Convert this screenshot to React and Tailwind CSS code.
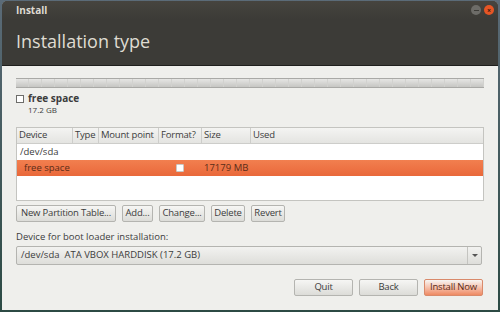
import React from 'react';

const font = { fontFamily: '"Open Sans", "DejaVu Sans", sans-serif' };

function Btn({ children, className = '' }) {
  return (
    <div className={`h-[17px] px-[3px] flex items-center justify-center whitespace-nowrap rounded-[2px] border border-[#b4b4b0] bg-gradient-to-b from-[#f6f6f4] to-[#dcdcd8] text-[9.5px] tracking-[-0.2px] text-[#3c3c3c] ${className}`}>
      {children}
    </div>
  );
}

export default function App() {
  const cols = [
    ['Device', 'w-[56px]'],
    ['Type', 'w-[26px]'],
    ['Mount point', 'w-[60px]'],
    ['Format?', 'w-[43px]'],
    ['Size', 'w-[49px]'],
    ['Used', 'flex-1'],
  ];
  return (
    <div className="w-[500px] h-[312px] bg-gradient-to-b from-[#5b6b78] to-[#2c4a44] overflow-hidden" style={font}>
      <div className="ml-[2px] mt-[1px] w-[496px] h-[309px] rounded-t-[5px] overflow-hidden flex flex-col bg-[#efefec]">
        {/* title bar + header */}
        <div className="bg-[#3c3b37] shrink-0">
          <div className="h-[18px] flex items-center justify-between pl-[14px] pr-[4px] bg-gradient-to-b from-[#46443f] to-[#3c3b37]">
            <span className="text-[10px] font-bold text-[#dfdbd2]">Install</span>
            <div className="flex items-center gap-[3px]">
              <div className="w-[10px] h-[10px] rounded-full bg-[#6d6c68] flex items-center justify-center">
                <div className="w-[5px] h-[1px] bg-[#3c3b37]" />
              </div>
              <div className="w-[10px] h-[10px] rounded-full bg-[#e55525] flex items-center justify-center text-[7px] leading-none font-bold text-[#3c1a0c]">×</div>
            </div>
          </div>
          <div className="h-[46px] flex items-center pl-[14px] pb-[2px]">
            <span className="text-[18px] text-[#dfdbd2]">Installation type</span>
          </div>
        </div>
        <div className="h-[1px] bg-[#1f1f1d] shrink-0" />

        <div className="flex-1 flex flex-col px-[14px] pt-[12px] whitespace-nowrap">
          {/* partition bar */}
          <div className="h-[10px] w-[468px] border-y border-[#a9a9a6] bg-gradient-to-b from-[#e6e6e4] to-[#c6c6c3] flex overflow-hidden">
            {Array.from({ length: 36 }).map((_, i) => (
              <div key={i} className="w-[13px] h-full border-r border-[#d2d2cf] shrink-0" />
            ))}
          </div>

          <div className="mt-[5px] h-[11px] flex items-center gap-[4px]">
            <div className="w-[8px] h-[8px] border border-[#6d6d6a] bg-white" />
            <span className="text-[10px] font-bold text-[#3c3c3c] leading-[11px]">free space</span>
          </div>
          <div className="mt-[1px] pl-[12px] text-[8px] text-[#3c3c3c] leading-[9px]">17.2 GB</div>

          {/* table */}
          <div className="mt-[13px] w-[468px] h-[74px] border border-[#c4c4c0] bg-white flex flex-col">
            <div className="h-[16px] flex bg-gradient-to-b from-[#f4f4f2] to-[#e4e4e1] border-b border-[#cdcdca]">
              {cols.map(([name, w], i) => (
                <div key={name} className={`${w} h-full flex items-center pl-[2px] text-[9.5px] tracking-[-0.2px] text-[#3c3c3c] ${i < 5 ? 'border-r border-[#cdcdca]' : ''}`}>
                  {name}
                </div>
              ))}
            </div>
            <div className="h-[16px] flex items-center pl-[3px] text-[9.5px] text-[#3c3c3c]">/dev/sda</div>
            <div className="h-[16px] flex items-center bg-gradient-to-b from-[#f27f4f] to-[#e9683a] text-[9.5px] text-[#5a2c18]">
              <div className="w-[141px] pl-[7px]">free space</div>
              <div className="w-[43px] flex justify-center">
                <div className="w-[8px] h-[8px] rounded-[1px] border border-[#c9c9c6] bg-white" />
              </div>
              <div className="pl-[3px]">17179 MB</div>
            </div>
          </div>

          <div className="mt-[4px] flex gap-[6px]">
            <Btn className="w-[100px]">New Partition Table...</Btn>
            <Btn className="w-[31px] from-[#e8e8e4] to-[#cfcfcb]">Add...</Btn>
            <Btn className="w-[46px]">Change...</Btn>
            <Btn className="w-[34px]">Delete</Btn>
            <Btn className="w-[34px]">Revert</Btn>
          </div>

          <div className="mt-[9px] text-[9.5px] text-[#3c3c3c] leading-[12px]">Device for boot loader installation:</div>
          <div className="mt-[3px] w-[466px] h-[19px] flex items-center rounded-[2px] border border-[#b4b4b0] bg-gradient-to-b from-[#f2f2f0] to-[#dededa] text-[9.5px] text-[#3c3c3c]">
            <div className="flex-1 pl-[4px]">/dev/sda&nbsp;&nbsp;ATA VBOX HARDDISK (17.2 GB)</div>
            <div className="w-[14px] h-full border-l border-[#c4c4c0] flex items-center justify-center">
              <div className="w-0 h-0 border-l-[3px] border-r-[3px] border-t-[3px] border-l-transparent border-r-transparent border-t-[#555]" />
            </div>
          </div>

          <div className="mt-[14px] flex justify-end gap-[6px] pr-[1px]">
            <Btn className="w-[59px]">Quit</Btn>
            <Btn className="w-[59px]">Back</Btn>
            <Btn className="w-[59px] border-[#d98a6b] from-[#f6a688] to-[#ee8a63] text-[#5a2c18]">Install Now</Btn>
          </div>
        </div>
      </div>
    </div>
  );
}
